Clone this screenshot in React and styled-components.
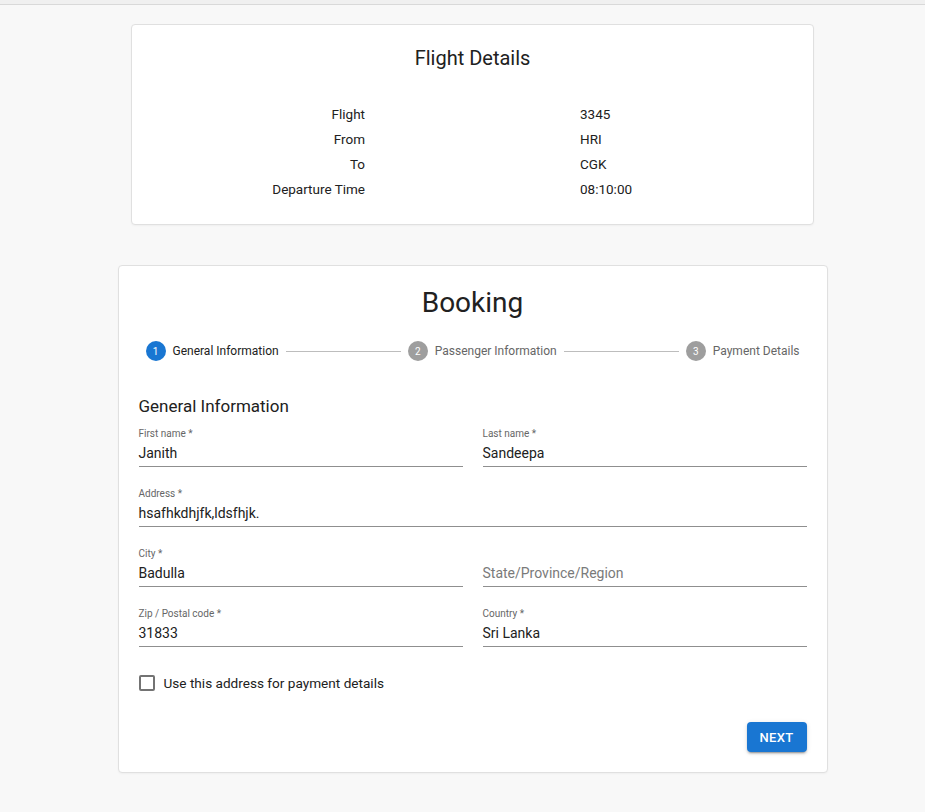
import React from "react";
import styled, { createGlobalStyle } from "styled-components";

const Global = createGlobalStyle`
  html, body { margin: 0; padding: 0; background: #f8f8f8; }
  body { font-family: Roboto, "Liberation Sans", Arial, sans-serif; color: #212121; }
  * { box-sizing: border-box; }
`;

const TopBar = styled.div`
  height: 5px;
  background: #f0f0f0;
  border-bottom: 1px solid #d9d9d9;
`;

const Page = styled.main`
  display: flex;
  flex-direction: column;
  align-items: center;
  padding: 19px 0 40px 20px;
  gap: 40px;
`;

const Card = styled.section`
  width: ${(p) => p.$w}px;
  background: #fff;
  border: 1px solid #e0e0e0;
  border-radius: 4px;
  box-shadow: 0 1px 2px rgba(0, 0, 0, 0.04);
`;

const FlightCard = styled(Card)`
  padding: 17px 0 22px;
`;

const Title = styled.h2`
  margin: 0;
  text-align: center;
  font-weight: 400;
  font-size: ${(p) => p.$size}px;
  line-height: ${(p) => p.$lh}px;
  color: #212121;
`;

const DetailGrid = styled.dl`
  margin: 28px 0 0;
  display: grid;
  grid-template-columns: 1fr 1fr;
  column-gap: 215px;
  font-size: 13.5px;
  line-height: 25px;
`;

const DetailLabel = styled.dt`
  text-align: right;
  margin: 0;
`;

const DetailValue = styled.dd`
  margin: 0;
`;

const BookingCard = styled(Card)`
  padding: 19px 20px 20px 20px;
`;

const Stepper = styled.div`
  display: flex;
  align-items: center;
  margin: 19px 0 0;
  padding: 0 7px;
  height: 24px;
`;

const Step = styled.div`
  display: flex;
  align-items: center;
  gap: 7px;
  flex: none;
`;

const StepCircle = styled.span`
  width: 20px;
  height: 20px;
  border-radius: 50%;
  background: ${(p) => (p.$active ? "#1976d2" : "#9e9e9e")};
  color: #fff;
  font-size: 10px;
  display: flex;
  align-items: center;
  justify-content: center;
`;

const StepLabel = styled.span`
  font-size: 12px;
  color: ${(p) => (p.$active ? "#212121" : "#666")};
`;

const Connector = styled.span`
  flex: 1;
  height: 1px;
  background: #bdbdbd;
  margin: 0 7px;
`;

const SectionHeading = styled.h3`
  margin: 30px 0 0;
  font-weight: 400;
  font-size: 17px;
  line-height: 27px;
  color: #212121;
`;

const FormGrid = styled.div`
  margin-top: 8px;
  display: grid;
  grid-template-columns: 1fr 1fr;
  column-gap: 20px;
  row-gap: 21px;
`;

const Field = styled.label`
  display: flex;
  flex-direction: column;
  grid-column: ${(p) => (p.$full ? "1 / -1" : "auto")};
`;

const FieldLabel = styled.span`
  font-size: 10px;
  line-height: 12px;
  height: 12px;
  color: #666;
`;

const FieldValue = styled.span`
  font-size: 14px;
  line-height: 17px;
  padding: 5px 0 4px;
  border-bottom: 1px solid #8f8f8f;
  color: ${(p) => (p.$placeholder ? "#7a7a7a" : "#212121")};
`;

const CheckRow = styled.div`
  margin-top: 24px;
  display: flex;
  align-items: center;
  gap: 9px;
  height: 24px;
  font-size: 13.6px;
  color: #212121;
`;

const CheckBox = styled.span`
  width: 16px;
  height: 16px;
  border: 2px solid #737373;
  border-radius: 2px;
`;

const Actions = styled.div`
  display: flex;
  justify-content: flex-end;
  margin-top: 27px;
`;

const Button = styled.button`
  background: #1976d2;
  color: #fff;
  border: none;
  border-radius: 4px;
  height: 30px;
  padding: 0 13px;
  font-family: inherit;
  font-weight: 500;
  font-size: 13px;
  letter-spacing: 0.3px;
  text-transform: uppercase;
  box-shadow: 0 3px 1px -2px rgba(0,0,0,0.2), 0 2px 2px 0 rgba(0,0,0,0.14), 0 1px 5px 0 rgba(0,0,0,0.12);
`;

const details = [
  ["Flight", "3345"],
  ["From", "HRI"],
  ["To", "CGK"],
  ["Departure Time", "08:10:00"],
];

const steps = ["General Information", "Passenger Information", "Payment Details"];

const fields = [
  { label: "First name *", value: "Janith" },
  { label: "Last name *", value: "Sandeepa" },
  { label: "Address *", value: "hsafhkdhjfk,ldsfhjk.", full: true },
  { label: "City *", value: "Badulla" },
  { label: "", value: "State/Province/Region", placeholder: true },
  { label: "Zip / Postal code *", value: "31833" },
  { label: "Country *", value: "Sri Lanka" },
];

export default function App() {
  return (
    <>
      <Global />
      <TopBar />
      <Page>
        <FlightCard $w={683}>
          <Title $size={20} $lh={32}>Flight Details</Title>
          <DetailGrid>
            {details.map(([k, v]) => (
              <React.Fragment key={k}>
                <DetailLabel>{k}</DetailLabel>
                <DetailValue>{v}</DetailValue>
              </React.Fragment>
            ))}
          </DetailGrid>
        </FlightCard>
        <BookingCard $w={710}>
          <Title $size={28} $lh={35}>Booking</Title>
          <Stepper>
            {steps.map((s, i) => (
              <React.Fragment key={s}>
                {i > 0 && <Connector />}
                <Step>
                  <StepCircle $active={i === 0}>{i + 1}</StepCircle>
                  <StepLabel $active={i === 0}>{s}</StepLabel>
                </Step>
              </React.Fragment>
            ))}
          </Stepper>
          <SectionHeading>General Information</SectionHeading>
          <FormGrid>
            {fields.map((f) => (
              <Field key={f.value} $full={f.full}>
                <FieldLabel>{f.label}</FieldLabel>
                <FieldValue $placeholder={f.placeholder}>{f.value}</FieldValue>
              </Field>
            ))}
          </FormGrid>
          <CheckRow>
            <CheckBox />
            Use this address for payment details
          </CheckRow>
          <Actions>
            <Button>Next</Button>
          </Actions>
        </BookingCard>
      </Page>
    </>
  );
}
